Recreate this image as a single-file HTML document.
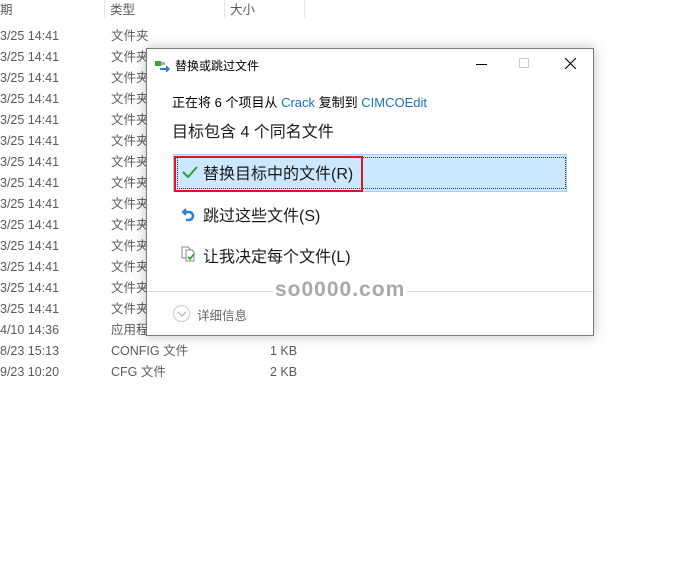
<!DOCTYPE html>
<html><head><meta charset="utf-8"><style>
*{margin:0;padding:0;box-sizing:border-box}
body{width:677px;height:577px;background:#fff;position:relative;overflow:hidden;font-family:"Liberation Sans","Noto Sans CJK SC",sans-serif;}
.t{position:absolute;font-size:12.5px;color:#5a5a5a;white-space:nowrap;line-height:14px}
.h{position:absolute;font-size:12.5px;color:#5a5a5a;top:-1px}
.sep{position:absolute;top:0;width:1px;height:18px;background:#e5e5e5}
.dlg{position:absolute;left:146px;top:48px;width:448px;height:288px;background:#fff;border:1px solid #7a7a7a;box-shadow:0 0 12px rgba(0,0,0,.25)}
.a{position:absolute;white-space:nowrap}
</style></head><body>
<div class="h" style="left:0">期</div><div class="h" style="left:110px">类型</div><div class="h" style="left:230px">大小</div>
<div class="sep" style="left:104px"></div><div class="sep" style="left:224px"></div><div class="sep" style="left:304px"></div>
<div class="t" style="left:0;top:29px">3/25 14:41</div><div class="t" style="left:111px;top:29px">文件夹</div>
<div class="t" style="left:0;top:50px">3/25 14:41</div><div class="t" style="left:111px;top:50px">文件夹</div>
<div class="t" style="left:0;top:71px">3/25 14:41</div><div class="t" style="left:111px;top:71px">文件夹</div>
<div class="t" style="left:0;top:92px">3/25 14:41</div><div class="t" style="left:111px;top:92px">文件夹</div>
<div class="t" style="left:0;top:113px">3/25 14:41</div><div class="t" style="left:111px;top:113px">文件夹</div>
<div class="t" style="left:0;top:134px">3/25 14:41</div><div class="t" style="left:111px;top:134px">文件夹</div>
<div class="t" style="left:0;top:155px">3/25 14:41</div><div class="t" style="left:111px;top:155px">文件夹</div>
<div class="t" style="left:0;top:176px">3/25 14:41</div><div class="t" style="left:111px;top:176px">文件夹</div>
<div class="t" style="left:0;top:197px">3/25 14:41</div><div class="t" style="left:111px;top:197px">文件夹</div>
<div class="t" style="left:0;top:218px">3/25 14:41</div><div class="t" style="left:111px;top:218px">文件夹</div>
<div class="t" style="left:0;top:239px">3/25 14:41</div><div class="t" style="left:111px;top:239px">文件夹</div>
<div class="t" style="left:0;top:260px">3/25 14:41</div><div class="t" style="left:111px;top:260px">文件夹</div>
<div class="t" style="left:0;top:281px">3/25 14:41</div><div class="t" style="left:111px;top:281px">文件夹</div>
<div class="t" style="left:0;top:302px">3/25 14:41</div><div class="t" style="left:111px;top:302px">文件夹</div>
<div class="t" style="left:0;top:323px">4/10 14:36</div><div class="t" style="left:111px;top:323px">应用程序</div>
<div class="t" style="left:0;top:344px">8/23 15:13</div><div class="t" style="left:111px;top:344px">CONFIG 文件</div><div class="t" style="left:270px;top:344px">1 KB</div>
<div class="t" style="left:0;top:365px">9/23 10:20</div><div class="t" style="left:111px;top:365px">CFG 文件</div><div class="t" style="left:270px;top:365px">2 KB</div>

<div class="dlg">
 <svg class="a" style="left:8px;top:11px" width="16" height="12"><rect x="0" y="1" width="6" height="5" fill="#3aa33a"/><rect x="6" y="2" width="4" height="3" fill="#aaa"/><path d="M5 8h6V5l4 4-4 4v-3H5z" fill="#2f7fd6"/></svg>
 <div class="a" style="left:28px;top:8px;font-size:12px;color:#000">替换或跳过文件</div>
 <div class="a" style="left:329px;top:15px;width:11px;height:1px;background:#000"></div>
 <div class="a" style="left:372px;top:9px;width:10px;height:10px;border:1px solid #ccc"></div>
 <svg class="a" style="left:418px;top:9px" width="11" height="11"><path d="M0 0L11 11M11 0L0 11" stroke="#000" stroke-width="1.1"/></svg>
 <div class="a" style="left:25px;top:43px;font-size:13px;color:#000">正在将 6 个项目从 <span style="color:#1a6fc9">Crack</span> 复制到 <span style="color:#1a6fc9">CIMCOEdit</span></div>
 <div class="a" style="left:25px;top:69px;font-size:16px;color:#1a1a1a">目标包含 4 个同名文件</div>
 <div class="a" style="left:26px;top:105px;width:394px;height:38px;background:#cce8ff;border:1px solid #99d1ff"></div>
 <div class="a" style="left:30px;top:108px;width:389px;height:32px;border:1px dotted #333"></div>
 <div class="a" style="left:27px;top:107px;width:189px;height:36px;border:2px solid #e81123"></div>
 <svg class="a" style="left:35px;top:117px" width="16" height="12"><path d="M1 6l5 5 9-10" stroke="#2a9d3a" stroke-width="2" fill="none"/></svg>
 <div class="a" style="left:56px;top:111px;font-size:16px;color:#1a1a1a">替换目标中的文件(R)</div>
 <svg class="a" style="left:35px;top:158px" width="14" height="16"><path d="M4 2L1 5l3 3" stroke="#2f7fd6" stroke-width="2.2" fill="none"/><path d="M2 5h5a4 4 0 010 8H4" stroke="#2f7fd6" stroke-width="2.6" fill="none"/></svg>
 <div class="a" style="left:56px;top:153px;font-size:16px;color:#1a1a1a">跳过这些文件(S)</div>
 <svg class="a" style="left:34px;top:197px" width="16" height="16"><path d="M1 1h6l2 2v9H1z" fill="#fff" stroke="#888"/><path d="M5 4h6l2 2v9H5z" fill="#fff" stroke="#888"/><path d="M7 11l2 2 4-5" stroke="#2a9d3a" stroke-width="1.6" fill="none"/></svg>
 <div class="a" style="left:56px;top:194px;font-size:16px;color:#1a1a1a">让我决定每个文件(L)</div>
 <div class="a" style="left:0;top:242px;width:446px;height:1px;background:#dcdcdc"></div>
 <div class="a" style="left:126px;top:229px;font-size:21px;font-weight:bold;letter-spacing:1px;color:#a8a8a8;background:#fff;padding:0 2px">so0000.com</div>
 <div class="a" style="left:26px;top:256px;width:17px;height:17px;border:1px solid #c8c8c8;border-radius:50%"></div>
 <svg class="a" style="left:30px;top:262px" width="10" height="6"><path d="M1 1l4 4 4-4" stroke="#aaa" fill="none"/></svg>
 <div class="a" style="left:50px;top:256px;font-size:12.5px;color:#666">详细信息</div>
</div>
</body></html>
